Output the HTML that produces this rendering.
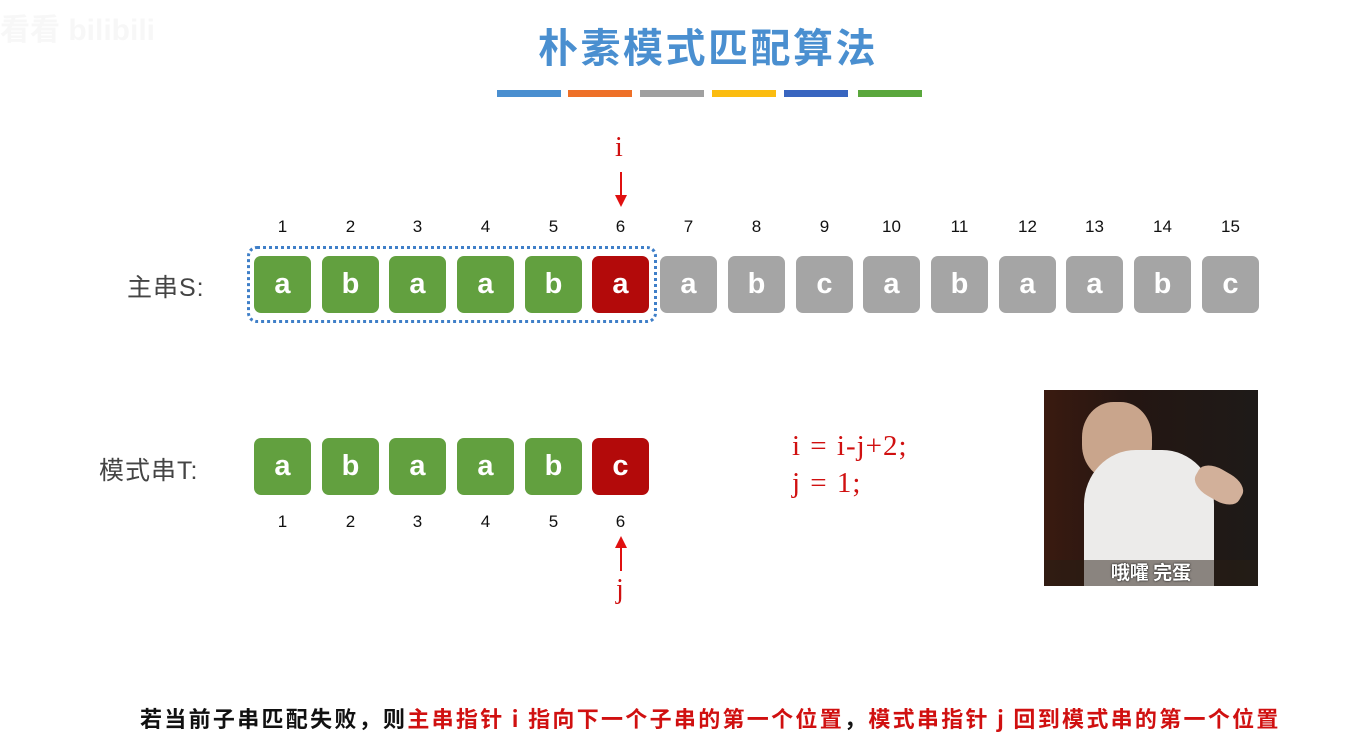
<!DOCTYPE html>
<html><head><meta charset="utf-8"><style>
body{margin:0;width:1364px;height:752px;background:#fff;position:relative;overflow:hidden;font-family:"Liberation Sans","Noto Sans CJK SC",sans-serif}
.a{position:absolute}
.b{position:absolute;width:57px;height:57px;border-radius:7px;color:#fff;font:bold 29px "Liberation Sans",sans-serif;text-align:center;line-height:57px}
.g{background:#62a03f}.r{background:#b30a0a}.y{background:#a5a5a5}
.n{position:absolute;width:57px;text-align:center;font:500 17px "Liberation Sans",sans-serif;color:#111}
.bar{position:absolute;top:90px;height:7px;width:64px}
.lbl{position:absolute;font-size:25px;color:#444;letter-spacing:1px}
.red{color:#d01010}
</style></head><body>
<div class="a" style="left:0;top:5px;font:bold 30px 'Liberation Sans','Noto Sans CJK SC',sans-serif;color:#f7f7f7">看看 bilibili</div>
<div class="a" style="left:538px;top:16px;color:#4a8fd0;font:bold 40px 'Noto Sans CJK SC',sans-serif;letter-spacing:2.5px;white-space:nowrap">朴素模式匹配算法</div>
<div class="bar" style="left:497px;background:#4a8fd0"></div>
<div class="bar" style="left:568px;background:#ee7028"></div>
<div class="bar" style="left:640px;background:#a0a0a0"></div>
<div class="bar" style="left:712px;background:#fbbc10"></div>
<div class="bar" style="left:784px;background:#3865c0"></div>
<div class="bar" style="left:858px;background:#5aa73c"></div>

<div class="a red" style="left:615px;top:132px;font:28px 'Liberation Serif',serif">i</div>
<div class="a" style="left:620px;top:172px;width:2px;height:24px;background:#e01010"></div>
<div class="a" style="left:615px;top:195px;border-left:6px solid transparent;border-right:6px solid transparent;border-top:12px solid #e01010"></div>

<div class="n" style="left:254px;top:217px">1</div><div class="n" style="left:322px;top:217px">2</div><div class="n" style="left:389px;top:217px">3</div><div class="n" style="left:457px;top:217px">4</div><div class="n" style="left:525px;top:217px">5</div><div class="n" style="left:592px;top:217px">6</div><div class="n" style="left:660px;top:217px">7</div><div class="n" style="left:728px;top:217px">8</div><div class="n" style="left:796px;top:217px">9</div><div class="n" style="left:863px;top:217px">10</div><div class="n" style="left:931px;top:217px">11</div><div class="n" style="left:999px;top:217px">12</div><div class="n" style="left:1066px;top:217px">13</div><div class="n" style="left:1134px;top:217px">14</div><div class="n" style="left:1202px;top:217px">15</div>

<div class="lbl" style="left:127px;top:268px">主串S:</div>
<div class="a" style="left:247px;top:246px;width:404px;height:71px;border:3px dotted #3f7fc8;border-radius:10px"></div>
<div class="b g" style="left:254px;top:256px">a</div><div class="b g" style="left:322px;top:256px">b</div><div class="b g" style="left:389px;top:256px">a</div><div class="b g" style="left:457px;top:256px">a</div><div class="b g" style="left:525px;top:256px">b</div><div class="b r" style="left:592px;top:256px">a</div><div class="b y" style="left:660px;top:256px">a</div><div class="b y" style="left:728px;top:256px">b</div><div class="b y" style="left:796px;top:256px">c</div><div class="b y" style="left:863px;top:256px">a</div><div class="b y" style="left:931px;top:256px">b</div><div class="b y" style="left:999px;top:256px">a</div><div class="b y" style="left:1066px;top:256px">a</div><div class="b y" style="left:1134px;top:256px">b</div><div class="b y" style="left:1202px;top:256px">c</div>

<div class="lbl" style="left:99px;top:451px">模式串T:</div>
<div class="b g" style="left:254px;top:438px">a</div><div class="b g" style="left:322px;top:438px">b</div><div class="b g" style="left:389px;top:438px">a</div><div class="b g" style="left:457px;top:438px">a</div><div class="b g" style="left:525px;top:438px">b</div><div class="b r" style="left:592px;top:438px">c</div>
<div class="n" style="left:254px;top:512px">1</div><div class="n" style="left:322px;top:512px">2</div><div class="n" style="left:389px;top:512px">3</div><div class="n" style="left:457px;top:512px">4</div><div class="n" style="left:525px;top:512px">5</div><div class="n" style="left:592px;top:512px">6</div>
<div class="a" style="left:615px;top:536px;border-left:6px solid transparent;border-right:6px solid transparent;border-bottom:12px solid #e01010"></div>
<div class="a" style="left:620px;top:547px;width:2px;height:24px;background:#e01010"></div>
<div class="a red" style="left:616px;top:574px;font:28px 'Liberation Serif',serif">j</div>

<div class="a red" style="left:792px;top:428px;font:29px/37px 'Liberation Serif',serif;letter-spacing:1px;word-spacing:1px">i = i-j+2;<br>j = 1;</div>

<div class="a" style="left:1044px;top:390px;width:214px;height:196px;background:linear-gradient(90deg,#3a1a10,#241612 40%,#1e1a18);overflow:hidden">
 <div class="a" style="left:38px;top:12px;width:70px;height:78px;border-radius:45%;background:#c9a58c"></div>
 <div class="a" style="left:40px;top:60px;width:130px;height:136px;border-radius:40% 40% 0 0;background:#ecebea"></div>
 <div class="a" style="left:150px;top:80px;width:50px;height:30px;border-radius:40%;background:#d2b09a;transform:rotate(30deg)"></div>
 <div class="a" style="left:0;top:170px;width:214px;height:26px;background:rgba(40,30,20,.5)"></div>
 <div class="a" style="left:0;width:214px;top:168px;text-align:center;color:#fff;font:bold 19px 'Noto Sans CJK SC',sans-serif;text-shadow:0 0 2px #000">哦嚯 完蛋</div>
</div>

<div class="a" style="left:140px;top:702px;font:bold 22px 'Noto Sans CJK SC',sans-serif;color:#111;white-space:nowrap;letter-spacing:2.3px">若当前子串匹配失败，则<span class="red">主串指针 i 指向下一个子串的第一个位置</span>，<span class="red">模式串指针 j 回到模式串的第一个位置</span></div>
</body></html>
